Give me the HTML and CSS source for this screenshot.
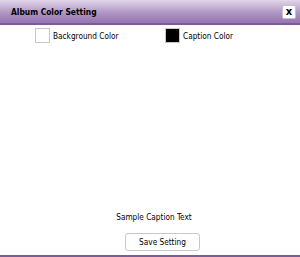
FILE: index.html
```html
<!DOCTYPE html>
<html lang="en">
<head>
    <meta charset="UTF-8">
    <title>Album Color Setting</title>
    <link rel="stylesheet" href="styles.css">
</head>
<body>
    <div class="dialog">
        <div class="title-bar">
            <span class="title">Album Color Setting</span>
            <button class="close-btn">x</button>
        </div>
        <div class="color-row">
            <div class="color-pick">
                <span class="swatch swatch-bg"></span>
                <span>Background Color</span>
            </div>
            <div class="color-pick">
                <span class="swatch swatch-caption"></span>
                <span>Caption Color</span>
            </div>
        </div>
        <div class="preview"></div>
        <div class="sample">Sample Caption Text</div>
        <div class="actions">
            <button class="save-btn">Save Setting</button>
        </div>
    </div>
</body>
</html>
```
FILE: styles.css
```css
body {
    margin: 0;
    font-family: "DejaVu Sans Condensed", "Liberation Sans", sans-serif;
    font-size: 8.2px;
    color: #000;
    background: #fff;
}

.dialog {
    width: 300px;
    height: 257px;
    display: flex;
    flex-direction: column;
    box-sizing: border-box;
    border-bottom: 2px solid #7b5c98;
}

.title-bar {
    height: 23px;
    display: flex;
    align-items: center;
    justify-content: space-between;
    padding: 0 4px 0 11px;
    background: linear-gradient(to bottom, #e2d6ea, #ab90c0 60%, #9676b0);
    border-bottom: 2px solid #7b5c98;
}

.title {
    font-weight: bold;
    font-size: 8.4px;
}

.close-btn {
    width: 14px;
    height: 14px;
    padding: 0;
    border: 1px solid #c9bcd4;
    border-radius: 2px;
    background: #fff;
    font-family: "DejaVu Sans", sans-serif;
    font-weight: bold;
    font-size: 10px;
    line-height: 11px;
    cursor: pointer;
}

.color-row {
    display: grid;
    grid-template-columns: 130px auto;
    padding: 3px 0 0 35px;
}

.color-pick {
    display: flex;
    align-items: center;
    gap: 3px;
}

.swatch {
    width: 13px;
    height: 13px;
    border: 1px solid #c8c8c8;
}

.swatch-bg {
    background: #fff;
}

.swatch-caption {
    background: #000;
}

.preview {
    flex: 1;
}

.sample {
    text-align: center;
    margin-bottom: 11px;
    padding-left: 8px;
}

.actions {
    display: flex;
    justify-content: center;
    padding: 0 0 4px 25px;
}

.save-btn {
    width: 75px;
    height: 18px;
    background: #fff;
    border: 1px solid #c8c8c8;
    border-radius: 3px;
    font-family: inherit;
    font-size: 8.2px;
    padding: 0;
}
```
